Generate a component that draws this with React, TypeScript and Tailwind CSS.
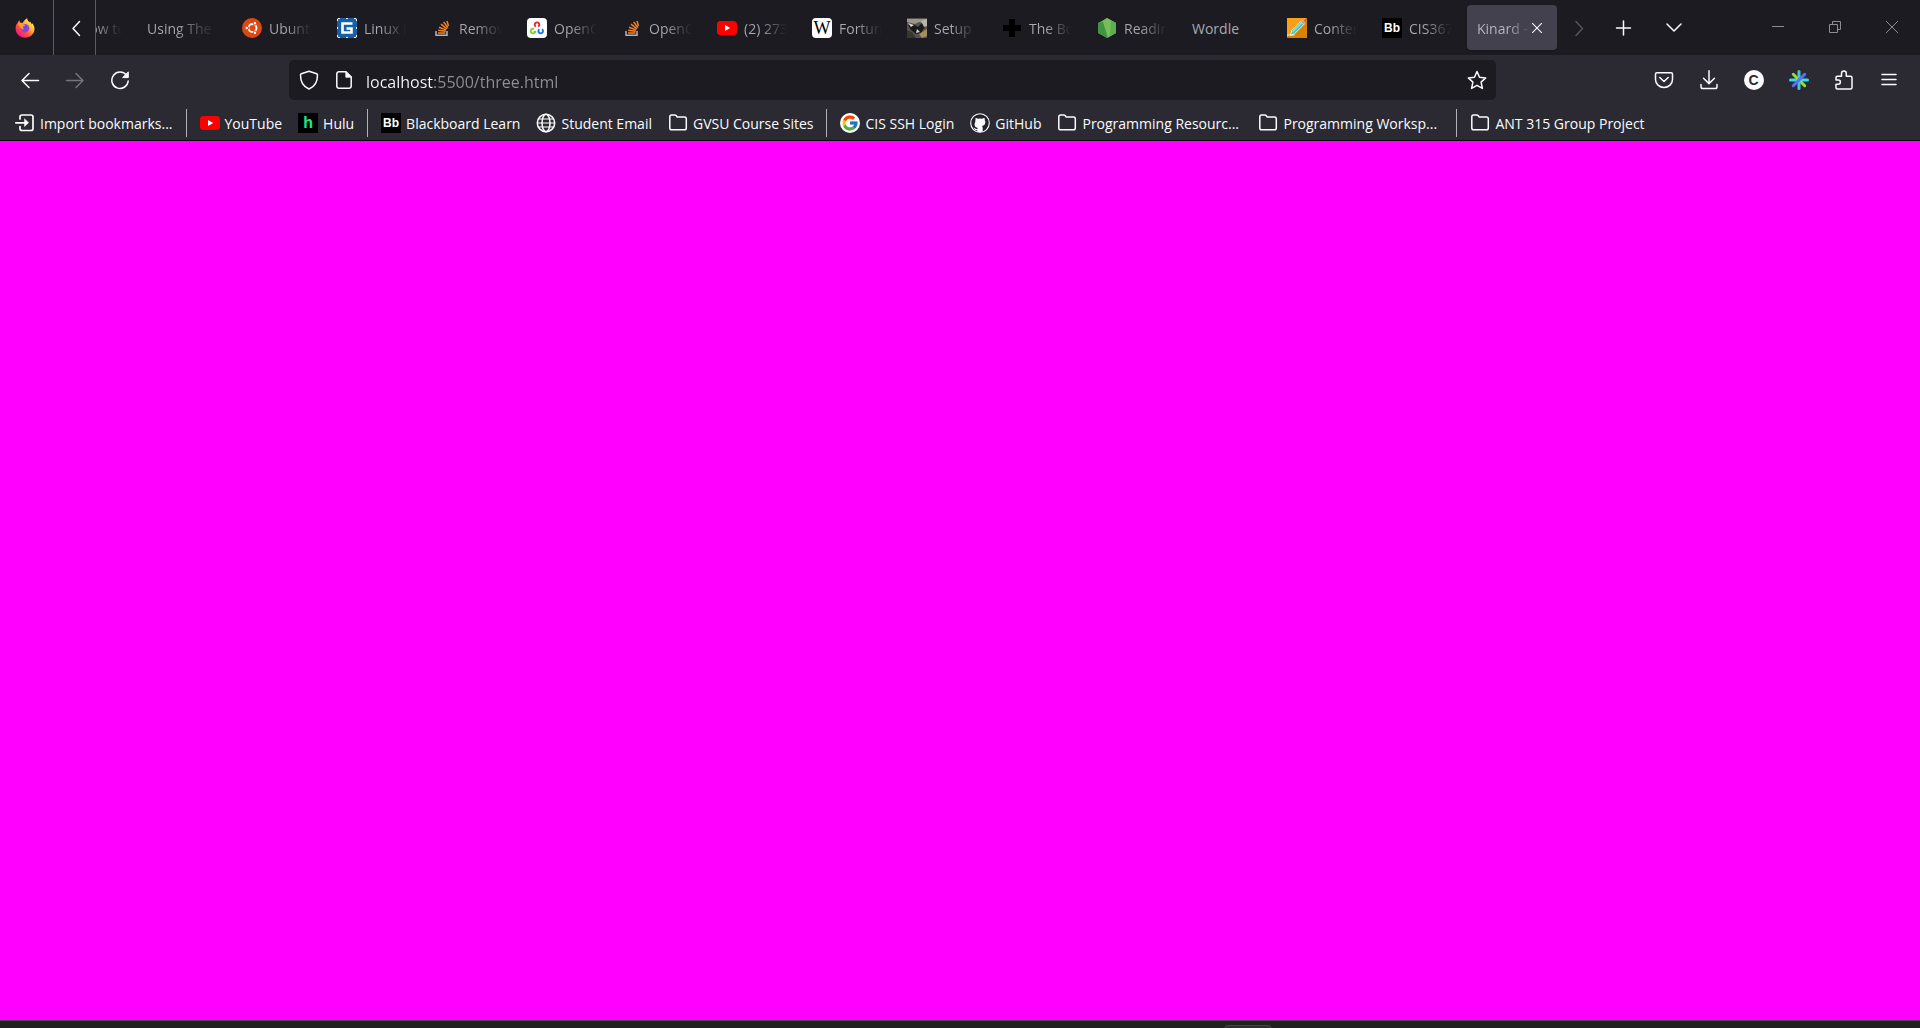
import type { ReactNode } from "react";
import { FcGoogle } from "react-icons/fc";

type IconProps = { children: ReactNode; size?: string };

function Icon({ children, size = "size-5" }: IconProps) {
  return (
    <svg viewBox="0 0 20 20" aria-hidden="true" className={`${size} shrink-0`} fill="none" stroke="currentColor" strokeWidth="1.5" strokeLinecap="round" strokeLinejoin="round">
      {children}
    </svg>
  );
}

function FirefoxLogo() {
  return (
    <Icon>
      <defs>
        <linearGradient id="fx-body" x1="0.85" y1="0.1" x2="0.15" y2="0.9">
          <stop offset="0" stopColor="#fff44f" />
          <stop offset="0.35" stopColor="#ffb02e" />
          <stop offset="0.65" stopColor="#ff5038" />
          <stop offset="1" stopColor="#f0128a" />
        </linearGradient>
        <radialGradient id="fx-globe">
          <stop offset="0" stopColor="#5a4bea" />
          <stop offset="1" stopColor="#a33fe0" />
        </radialGradient>
      </defs>
      <path stroke="none" fill="url(#fx-body)" d="M12.2.3c.1 1.900 1 2.700 2.100 4 .4-.2.500-.7.500-.7 1.200 1 1.600 2.200 1.700 2.900.4-.3.500-1 .4-1.500 1.700 1.700 2.600 3.700 2.600 6.100 0 4.900-4.200 8.600-9.400 8.600-5.300 0-9.500-4-9.500-9.200 0-2.300.5-3.500 1.300-5 .1.500.2.800.4 1.100.1-1.700 1-3.500 2.200-4.300 0 .8.100 1.600.6 2.200 1 0 1.700.2 2.500.6C8.900 2.900 10.300 1.200 12.200.3z" />
      <circle stroke="none" fill="url(#fx-globe)" cx="10" cy="10.200" r="4.300" />
      <path stroke="none" fill="#ff9a2a" d="M2.500 5.500c1.700-1 3.800-.7 5.300.2.400.8 1.600 1 2.600 1.100-.2 1-2 1.300-2.400 2.200-.2 1 .4 1.900 1.600 2-1.500.9-3.400 0-4.300-1.200C4.500 8.400 3.500 7 2.500 5.500z" />
    </Icon>
  );
}

function UbuntuIcon() {
  return (
    <Icon>
      <circle cx="10" cy="10" r="10" fill="#dd4814" stroke="none" />
      <circle cx="10.500" cy="10" r="4" stroke="#fff" strokeWidth="1.800" />
      <g stroke="#dd4814" strokeWidth="1" fill="#fff">
        <circle cx="4.800" cy="10" r="1.800" />
        <circle cx="13" cy="5.200" r="1.800" />
        <circle cx="13" cy="14.800" r="1.800" />
      </g>
    </Icon>
  );
}

function LinuxForumIcon() {
  return (
    <Icon>
      <rect width="20" height="20" fill="#1560a8" stroke="none" />
      <path d="M1 .5h18M1 19.500h18M.5 1v18M19.500 1v18" stroke="#fff" strokeWidth="1" strokeDasharray="2 6" strokeLinecap="butt" />
      <path d="M15.500 5.500H5.500v9h9V10.500H9.500" stroke="#fff" strokeWidth="2.600" strokeLinecap="butt" strokeLinejoin="miter" />
    </Icon>
  );
}

function StackOverflowIcon() {
  return (
    <Icon>
      <path d="M4 13v4.300h11V13" stroke="#b4b4b8" strokeWidth="1.500" strokeLinecap="butt" strokeLinejoin="miter" />
      <path d="M6 15h7.500M6.200 12.300l7.500 1M7 9.300l7 2.600M9 6.200l6 4.600M11.700 4l4.200 5.600M15 3l1.500 5" stroke="#f48024" strokeWidth="1.500" strokeLinecap="butt" />
    </Icon>
  );
}

function OpenCvIcon() {
  return (
    <Icon>
      <rect width="20" height="20" rx="4" fill="#fff" stroke="none" />
      <g strokeWidth="1.900" strokeLinecap="butt">
        <path d="M8.700 8.600a2.300 2.300 0 1 1 2.600 0" stroke="#f0202c" />
        <path d="M7 11a2.300 2.300 0 1 0 1.300 2.600H6.500" stroke="#7bd02c" />
        <path d="M12.400 11.200a2.300 2.300 0 1 0 2.600 0" stroke="#1276f0" />
      </g>
    </Icon>
  );
}

function YouTubeIcon() {
  return (
    <Icon>
      <rect y="3" width="20" height="14" rx="3.500" fill="#f00" stroke="none" />
      <path d="M8 7v6l5.200-3z" fill="#fff" stroke="none" />
    </Icon>
  );
}

function SetupIcon() {
  return (
    <Icon>
      <rect width="20" height="20" fill="#55524d" stroke="none" />
      <g stroke="none">
        <path d="M0 1h20v5l-8-2-4 2-8-2z" fill="#99968e" />
        <path d="M1 7l5-1 5 3 4-4 4 2-5 8-5 1-5-4z" fill="#191919" />
        <path d="M1 5l6 2-3 2z M10 11l3 3-4 1z" fill="#d7d4cc" />
        <path d="M12 16l8-5v7l-5 2z" fill="#a88c5c" />
        <path d="M14 3l6-2v7l-3 1z" fill="#b9b5ac" />
        <path d="M0 12l5 2 4 6H0z" fill="#373631" />
      </g>
    </Icon>
  );
}

function NodeIcon() {
  return (
    <Icon>
      <g stroke="none">
        <path d="M10 0l9 5v10l-9 5-9-5V5z" fill="#57a849" />
        <path d="M10 0l9 5v10L10 20 5 4z" fill="#79bd5a" />
        <path d="M1 5l5-1 5 16-10-5z" fill="#429343" />
        <path d="M14 2l5 3v10l-6 3z" fill="#4ba34b" opacity=".6" />
      </g>
    </Icon>
  );
}

function PencilIcon() {
  return (
    <Icon>
      <path d="M0 0h20L0 20z" fill="#fb9f16" stroke="none" />
      <path d="M20 0v20H0z" fill="#d98200" stroke="none" />
      <path d="M0 17h7" stroke="#ffd07c" />
      <path d="M3.500 17l1.300-4.500L14 3.300l3 3L7.800 15.500z" fill="#48c8bd" stroke="#fff" strokeWidth=".8" />
      <path d="M6 13.500L14.500 5" stroke="#bdf0ea" strokeWidth="1" />
      <path d="M14 3.300l1.200-1.100 3 3L17 6.300z" fill="#e97aba" stroke="#f5c6df" strokeWidth=".6" />
    </Icon>
  );
}

function PlusBlackIcon() {
  return (
    <Icon>
      <path d="M7 1h6v6h6v6h-6v6H7v-6H1V7h6z" fill="#000" stroke="none" />
    </Icon>
  );
}

const BbIcon = () => (
  <span className="flex size-5 shrink-0 items-center justify-center bg-black font-['Liberation_Sans'] text-xs font-bold leading-none text-white">Bb</span>
);
const WikiIcon = () => (
  <span className="flex size-5 shrink-0 items-center justify-center rounded bg-white font-['Liberation_Serif'] text-lg leading-none text-black">W</span>
);
const HuluIcon = () => (
  <span className="flex size-5 shrink-0 items-center justify-center bg-black font-['Liberation_Sans'] text-base font-bold leading-none text-[#1ce783]">h</span>
);
const GoogleIcon = () => (
  <span className="flex size-5 shrink-0 items-center justify-center rounded-full bg-white">
    <FcGoogle className="size-[18px]" aria-hidden="true" />
  </span>
);

function FolderIcon() {
  return (
    <Icon>
      <path d="M1.800 3.800q0-1.800 1.800-1.800h3.200q.8 0 1.300.6l1.100 1.300h7.300q1.800 0 1.800 1.800v9.200q0 1.800-1.800 1.800H3.600q-1.800 0-1.800-1.800z" />
    </Icon>
  );
}

function ImportIcon() {
  return (
    <Icon>
      <path d="M5 6V4q0-2 2-2h9q2 0 2 2v11.500q0 2-2 2H7q-2 0-2-2v-2M.8 9.800H12" strokeWidth="1.700" />
      <path d="M9.500 6v7.600l4-3.800z" fill="currentColor" strokeWidth=".5" />
    </Icon>
  );
}

function GlobeIcon() {
  return (
    <Icon>
      <circle cx="10" cy="10" r="8.700" />
      <ellipse cx="10" cy="10" rx="4" ry="8.700" />
      <path d="M1.500 10h17M2.600 6h14.800M2.600 14h14.800" strokeWidth="1.200" />
    </Icon>
  );
}

function GitHubIcon() {
  return (
    <Icon>
      <circle cx="10" cy="10" r="9.300" fill="#24232b" strokeWidth="1.100" />
      <path stroke="none" fill="#fbfbfe" d="M5.500 5q.5-.4 2.500.8 2-.4 4 0 2-1.200 2.500-.8.400.8.200 2 .8 1 .6 2.800-.3 2.700-3.300 3.100.7.800.7 2v3.900q-2.700.7-5.400 0v-1.600q-2.300.3-3-1.500l-.8-1q1.200-.3 2 1 .7.700 1.800.4 0-.7.600-1.200-3-.4-3.300-3.100-.2-1.800.700-2.800-.2-1.200.2-2z" />
    </Icon>
  );
}

type Tab = { title: string; icon?: ReactNode; active?: boolean };

const tabs: Tab[] = [
  { title: "How to", icon: <span className="size-5 shrink-0" /> },
  { title: "Using The" },
  { title: "Ubuntu", icon: <UbuntuIcon /> },
  { title: "Linux F", icon: <LinuxForumIcon /> },
  { title: "Remov", icon: <StackOverflowIcon /> },
  { title: "OpenC", icon: <OpenCvIcon /> },
  { title: "OpenC", icon: <StackOverflowIcon /> },
  { title: "(2) 273", icon: <YouTubeIcon /> },
  { title: "Fortun", icon: <WikiIcon /> },
  { title: "Setup", icon: <SetupIcon /> },
  { title: "The Bo", icon: <PlusBlackIcon /> },
  { title: "Readin", icon: <NodeIcon /> },
  { title: "Wordle" },
  { title: "Conten", icon: <PencilIcon /> },
  { title: "CIS367", icon: <BbIcon /> },
  { title: "Kinard -", active: true },
];

function TabItem({ tab }: { tab: Tab }) {
  if (tab.active) {
    return (
      <div role="tab" aria-selected="true" className="flex h-[45px] w-[90px] shrink-0 items-center rounded bg-[#42414d] pl-2.5 shadow">
        <span className="w-[52px] overflow-hidden whitespace-nowrap bg-linear-to-r from-[#b8b8bf] from-60% to-[#4c4b57] bg-clip-text pt-0.5 text-transparent">{tab.title}</span>
        <button type="button" aria-label="Close tab" className="flex size-4 items-center justify-center text-[#fbfbfe]">
          <Icon size="size-3.5">
            <path d="M3.500 3.500l13 13m0-13l-13 13" />
          </Icon>
        </button>
      </div>
    );
  }
  return (
    <button type="button" role="tab" aria-selected="false" className="flex h-[45px] w-[90px] shrink-0 items-center gap-[7px] px-2.5 text-left">
      {tab.icon}
      <span className={tab.title === "Wordle" ? "pt-0.5 text-[#a9a9ae]" : "min-w-0 flex-1 overflow-hidden whitespace-nowrap bg-linear-to-r from-[#a9a9ae] from-40% to-[#1c1b22] bg-clip-text pt-0.5 text-transparent"}>{tab.title}</span>
    </button>
  );
}

function ToolButton({ label, children, dim }: { label: string; children: ReactNode; dim?: boolean }) {
  return (
    <button type="button" aria-label={label} className={`flex h-10 w-[45px] shrink-0 items-center justify-center ${dim ? "text-[#76757e]" : "text-[#fbfbfe]"}`}>
      {children}
    </button>
  );
}

function WindowButton({ label, children }: { label: string; children: ReactNode }) {
  return (
    <button type="button" aria-label={label} className="flex h-[54px] w-[57px] items-center justify-center text-[#8d8d91]">
      <svg viewBox="0 0 14 14" className="size-3.5" fill="none" stroke="currentColor" aria-hidden="true">
        {children}
      </svg>
    </button>
  );
}

function Bookmark({ icon, label, clip }: { icon: ReactNode; label: string; clip?: boolean }) {
  return (
    <a href="#" className="flex h-[30px] shrink-0 items-center gap-[5px] px-2">
      {icon}
      <span className={clip ? "w-40 truncate pt-0.5" : "whitespace-nowrap pt-0.5"}>{label}</span>
    </a>
  );
}

const Separator = () => <span className="mx-[5px] h-7 w-px shrink-0 bg-[#b0b0b5]" />;

export default function App() {
  return (
    <div className="flex min-h-screen flex-col bg-[#2b2a33] font-['Open_Sans','Noto_Sans',sans-serif] text-sm text-[#fbfbfe]">
      <header>
        <div className="flex h-[55px] bg-[#1c1b22]">
          <div className="flex w-[54px] shrink-0 items-center justify-center border-r border-[#5b5b60] pr-1">
            <FirefoxLogo />
          </div>
          <button type="button" aria-label="Scroll tabs left" className="flex w-[42px] shrink-0 items-center justify-center border-r border-[#5b5b60] pl-1">
            <Icon>
              <path d="M12.500 3.500L6 10.500l6.500 7" />
            </Icon>
          </button>
          <div role="tablist" className="flex min-w-0 flex-1 items-center justify-end gap-[5px] overflow-hidden">
            {tabs.map((tab, i) => (
              <TabItem key={i} tab={tab} />
            ))}
          </div>
          <div className="flex shrink-0 items-center">
            <button type="button" aria-label="Scroll tabs right" className="flex w-[43px] justify-center text-[#55545c]">
              <Icon>
                <path d="M7 3.500l6.500 7-6.500 7" />
              </Icon>
            </button>
            <ToolButton label="New tab">
              <Icon>
                <path d="M10.500 3v14M3.500 10h14" />
              </Icon>
            </ToolButton>
            <button type="button" aria-label="List all tabs" className="ml-1 flex w-[50px] justify-center">
              <Icon>
                <path d="M3 6l7 7 7-7" />
              </Icon>
            </button>
          </div>
          <div className="ml-[50px] flex shrink-0">
            <WindowButton label="Minimize"><path d="M1 6.500h12" /></WindowButton>
            <WindowButton label="Restore"><path d="M1.500 4.500h8v8h-8zM4.500 4.500v-3h8v8h-3" /></WindowButton>
            <WindowButton label="Close"><path d="M1 1l12 12M13 1L1 13" /></WindowButton>
          </div>
        </div>

        <nav className="flex items-center pl-[7px] pr-[9px] pt-[5px]" aria-label="Navigation">
          <ToolButton label="Back">
            <Icon><path d="M18.500 10.500H2m7-7l-7 7 7 7" /></Icon>
          </ToolButton>
          <ToolButton label="Forward" dim>
            <Icon><path d="M1.500 10.500H18m-7-7l7 7-7 7" /></Icon>
          </ToolButton>
          <ToolButton label="Reload">
            <Icon>
              <path d="M16.700 5.500A8.200 8.200 0 1 0 18.200 11" />
              <path d="M18.300 2.300v5.300H13z" fill="currentColor" strokeWidth="1" />
            </Icon>
          </ToolButton>
          <div className="w-[147px] shrink" />
          <div className="flex h-10 min-w-0 flex-1 items-center rounded-[5px] bg-[#1c1b22] pl-2.5 pr-[9px]">
            <Icon>
              <path d="M10 1.200L2.300 3.700q-.8.300-.8 1.200C1.500 11 4 16.500 10 19c6-2.500 8.500-8 8.500-14.100q0-.9-.8-1.200z" />
            </Icon>
            <span className="ml-[15px] flex">
              <Icon>
                <path d="M12 1.800H5.300Q2.800 1.800 2.800 4v12q0 2.300 2.500 2.300h9.400q2.500 0 2.500-2.300V7z" />
                <path d="M11.800 1.800v5.400h5.400z" fill="currentColor" strokeWidth=".8" />
              </Icon>
            </span>
            <input
              type="text"
              aria-label="Address"
              defaultValue="localhost:5500/three.html"
              className="ml-3 min-w-0 flex-1 bg-linear-to-r from-[#fbfbfe] from-[68px] to-[#8f8f98] to-[68px] bg-clip-text pt-1 text-base text-transparent outline-none"
            />
            <button type="button" aria-label="Bookmark this page">
              <Icon>
                <path d="M10 1.500l2.500 5.700 6.200.7-4.600 4.200 1.300 6.300L10 15.300l-5.400 3.100 1.300-6.300L1.300 7.900l6.200-.7z" />
              </Icon>
            </button>
          </div>
          <div className="w-[145px] shrink" />
          <ToolButton label="Save to Pocket">
            <Icon>
              <path d="M3 2.700h14q1.500 0 1.500 1.500v5.300a8.500 8 0 0 1-17 0V4.200Q1.500 2.700 3 2.700z" />
              <path d="M5.800 7.500L10 11.500l4.200-4" />
            </Icon>
          </ToolButton>
          <ToolButton label="Downloads">
            <Icon><path d="M10 .8v12.500m-5.500-5l5.500 5.300 5.500-5.300M2 14.500v2.200q0 1.800 1.800 1.800h12.400q1.800 0 1.800-1.800v-2.200" /></Icon>
          </ToolButton>
          <ToolButton label="Account">
            <span className="flex size-5 items-center justify-center rounded-full bg-[#fbfbfe] font-['Liberation_Sans'] text-sm font-bold leading-none text-[#2b2a33]">C</span>
          </ToolButton>
          <ToolButton label="Colour extension">
            <Icon>
              <g strokeWidth="3">
                <path d="M1.500 10h17" stroke="#2fdcf8" />
                <path d="M4.300 4.300l11.400 11.400" stroke="#92e52e" />
                <path d="M10 1.500v17" stroke="#42c6d2" />
                <path d="M15.700 4.300L4.300 15.700" stroke="#5b70f5" />
              </g>
            </Icon>
          </ToolButton>
          <ToolButton label="Extensions">
            <Icon>
              <path d="M3.200 19q-1.200 0-1.200-1.200v-3.600h2.300a2.100 2.100 0 0 0 0-4.200H2V7.500q0-1.300 1.300-1.300h4.200V3.500a2.400 2.400 0 0 1 4.800 0v2.700h4.200q1.500 0 1.500 1.500v9.800q0 1.500-1.500 1.500z" />
            </Icon>
          </ToolButton>
          <ToolButton label="Menu">
            <Icon><path d="M3 4.500h14M3 9.500h14M3 14.500h14" /></Icon>
          </ToolButton>
        </nav>

        <nav className="flex h-[41px] items-center overflow-hidden border-b border-[#0c0c0d] px-[7px] pb-0.5 pt-2" aria-label="Bookmarks">
          <Bookmark icon={<ImportIcon />} label="Import bookmarks..." />
          <Separator />
          <Bookmark icon={<YouTubeIcon />} label="YouTube" />
          <Bookmark icon={<HuluIcon />} label="Hulu" />
          <Separator />
          <Bookmark icon={<BbIcon />} label="Blackboard Learn" />
          <Bookmark icon={<GlobeIcon />} label="Student Email" />
          <Bookmark icon={<FolderIcon />} label="GVSU Course Sites" />
          <Separator />
          <Bookmark icon={<GoogleIcon />} label="CIS SSH Login" />
          <Bookmark icon={<GitHubIcon />} label="GitHub" />
          <Bookmark icon={<FolderIcon />} label="Programming Resourc..." clip />
          <Bookmark icon={<FolderIcon />} label="Programming Worksp..." clip />
          <Separator />
          <Bookmark icon={<FolderIcon />} label="ANT 315 Group Project" />
        </nav>
      </header>

      <main className="flex-1 bg-[#ff00ff]" />

      <footer className="flex h-2 justify-center overflow-hidden border-t border-[#4c4c4c] bg-[#202020] pl-[576px] pt-1">
        <div className="h-5 w-12 rounded border border-[#444] bg-[#2e2e2e]" />
      </footer>
    </div>
  );
}
